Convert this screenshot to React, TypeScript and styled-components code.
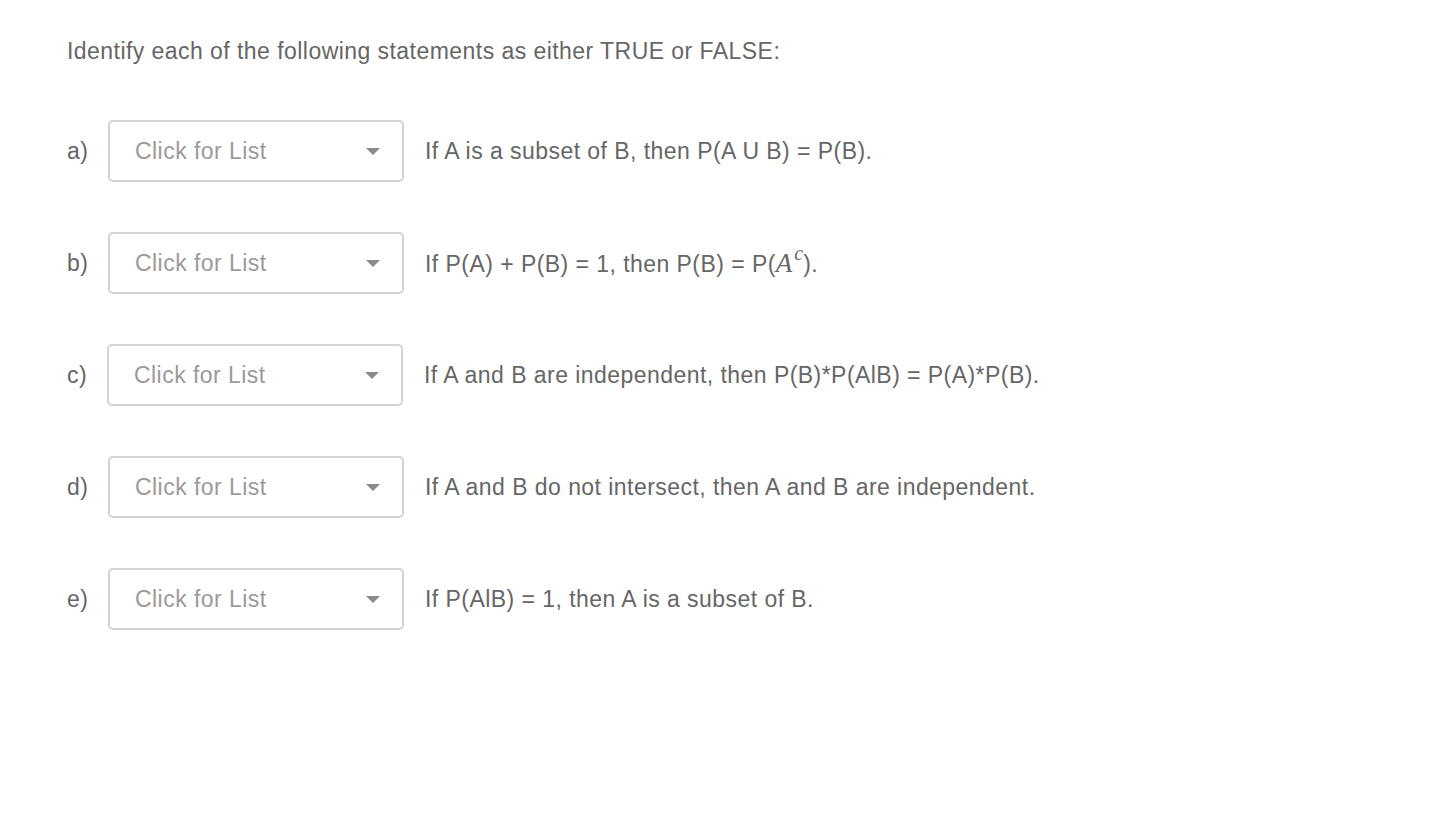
import React from "react";
import styled, { createGlobalStyle } from "styled-components";

const Global = createGlobalStyle`
  html, body { margin: 0; padding: 0; background: #fff; }
  body { font-family: "Liberation Sans", Arial, Helvetica, sans-serif; }
`;

const Page = styled.div`
  padding: 36px 0 0 67px;
  color: #666666;
  font-size: 23px;
  letter-spacing: 0.45px;
`;

const Heading = styled.div`
  line-height: 31px;
  margin-bottom: 53px;
`;

const List = styled.div`
  display: flex;
  flex-direction: column;
  gap: 50px;
`;

const Row = styled.div`
  display: flex;
  align-items: center;
  height: 62px;
`;

const Label = styled.span`
  width: 41px;
  flex-shrink: 0;
`;

const Select = styled.div<{ $shift?: number }>`
  box-sizing: border-box;
  width: 296px;
  height: 62px;
  border: 2px solid #d4d4d4;
  border-radius: 5px;
  display: flex;
  align-items: center;
  justify-content: space-between;
  padding: 0 22px 0 25px;
  margin-left: ${(p) => p.$shift ?? 0}px;
  color: #9a9a9a;
  background: #fff;
`;

const Arrow = styled.span`
  width: 0;
  height: 0;
  border-left: 7px solid transparent;
  border-right: 7px solid transparent;
  border-top: 7px solid #8a8a8a;
  margin-top: 1px;
`;

const Statement = styled.span`
  margin-left: 21px;
  white-space: nowrap;
`;

const MathA = styled.span`
  font-family: "Liberation Serif", "Times New Roman", serif;
  font-style: italic;
  font-size: 27px;
  letter-spacing: 0;
`;

const Sup = styled.sup`
  font-family: "Liberation Serif", "Times New Roman", serif;
  font-style: italic;
  font-size: 20px;
  vertical-align: 12px;
  line-height: 0;
  letter-spacing: 0;
  margin-left: 2px;
`;

const rows: { label: string; shift?: number; text: React.ReactNode }[] = [
  { label: "a)", text: "If A is a subset of B, then P(A U B) = P(B)." },
  {
    label: "b)",
    text: (
      <>
        If P(A) + P(B) = 1, then P(B) = P(<MathA>A</MathA>
        <Sup>c</Sup>).
      </>
    ),
  },
  {
    label: "c)",
    shift: -1,
    text: "If A and B are independent, then P(B)*P(AlB) = P(A)*P(B).",
  },
  { label: "d)", text: "If A and B do not intersect, then A and B are independent." },
  { label: "e)", text: "If P(AlB) = 1, then A is a subset of B." },
];

export default function App() {
  return (
    <>
      <Global />
      <Page>
        <Heading>Identify each of the following statements as either TRUE or FALSE:</Heading>
        <List>
          {rows.map((r) => (
            <Row key={r.label}>
              <Label>{r.label}</Label>
              <Select $shift={r.shift}>
                <span>Click for List</span>
                <Arrow />
              </Select>
              <Statement>{r.text}</Statement>
            </Row>
          ))}
        </List>
      </Page>
    </>
  );
}
